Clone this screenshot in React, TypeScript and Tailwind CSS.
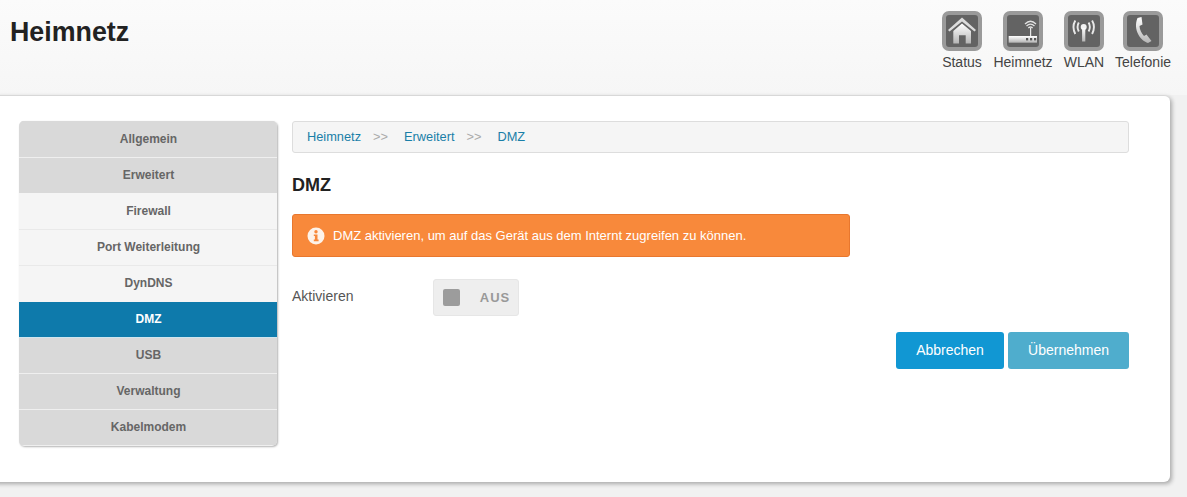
const MENU = [
  { label: "Allgemein", bg: "bg-[#d9d9d9] text-[#666666]", line: "border-[#d9d9d9]" },
  { label: "Erweitert", bg: "bg-[#d9d9d9] text-[#666666]", line: "border-[#efefef]" },
  { label: "Firewall", bg: "bg-[#f5f5f5] text-[#666666]", line: "border-[#f5f5f5]" },
  { label: "Port Weiterleitung", bg: "bg-[#f5f5f5] text-[#666666]", line: "border-[#e9e9e9]" },
  { label: "DynDNS", bg: "bg-[#f5f5f5] text-[#666666]", line: "border-[#e9e9e9]" },
  { label: "DMZ", bg: "bg-[#0e7aab] text-white", line: "border-[#f5f5f5]" },
  { label: "USB", bg: "bg-[#d9d9d9] text-[#666666]", line: "border-[#cfe6ef]" },
  { label: "Verwaltung", bg: "bg-[#d9d9d9] text-[#666666]", line: "border-[#efefef]" },
  { label: "Kabelmodem", bg: "bg-[#d9d9d9] text-[#666666]", line: "border-[#efefef]" },
];

function IconBox({ children }: { children: React.ReactNode }) {
  return (
    <div className="w-[40px] h-[40px] rounded-[7px] border-[4px] border-[#9a9a9a] bg-[#636363] overflow-hidden">
      <svg width="32" height="32" viewBox="0 0 32 32">
        <defs>
          <linearGradient id="fade" x1="0" y1="0" x2="0" y2="1">
            <stop offset="0" stopColor="#ffffff" />
            <stop offset="1" stopColor="#b5b5b5" />
          </linearGradient>
        </defs>
        {children}
      </svg>
    </div>
  );
}

function HomeIcon() {
  return (
    <IconBox>
      <path d="M16 2.5 L30 15 L28.5 16.5 L16 6.5 L3.5 16.5 L2 15 Z" fill="#dcdcdc" />
      <path d="M16 8.5 L25 16 V28.5 H19.7 V20.3 H13 V28.5 H7.3 V16 Z" fill="url(#fade)" />
    </IconBox>
  );
}

function RouterIcon() {
  return (
    <IconBox>
      <path d="M18 9 Q23.5 3.5 29 9" fill="none" stroke="#e0e0e0" strokeWidth="1.3" />
      <path d="M19.5 11 Q23.5 7.2 27.5 11" fill="none" stroke="#e0e0e0" strokeWidth="1.3" />
      <path d="M21.3 13 Q23.5 11 25.7 13" fill="none" stroke="#e0e0e0" strokeWidth="1.3" />
      <rect x="23" y="13" width="1.2" height="8" fill="#e8e8e8" />
      <rect x="1.7" y="21" width="28.3" height="6.7" fill="url(#fade)" />
      <rect x="19" y="23" width="2.2" height="2.4" fill="#555555" />
      <rect x="23" y="23" width="2.2" height="2.4" fill="#555555" />
      <rect x="27" y="23" width="2.2" height="2.4" fill="#555555" />
    </IconBox>
  );
}

function WlanIcon() {
  return (
    <IconBox>
      <circle cx="15.7" cy="12" r="3" fill="#f2f2f2" />
      <path d="M14.1 13 H17.3 V26.5 H14.1 Z" fill="url(#fade)" />
      <path d="M10.8 7.5 Q8.3 12 10.8 16.5" fill="none" stroke="#e8e8e8" strokeWidth="1.9" />
      <path d="M20.6 7.5 Q23.1 12 20.6 16.5" fill="none" stroke="#e8e8e8" strokeWidth="1.9" />
      <path d="M7.3 5.5 Q3.6 12 7.3 19" fill="none" stroke="#e8e8e8" strokeWidth="1.9" />
      <path d="M24.1 5.5 Q27.8 12 24.1 19" fill="none" stroke="#e8e8e8" strokeWidth="1.9" />
    </IconBox>
  );
}

function PhoneIcon() {
  return (
    <IconBox>
      <path
        d="M10.5 3 L14.5 2 L15.5 9.5 L12.5 11 C12.5 14.5 14.5 18 17 21 L19.5 19.5 L24.5 26 L21 28 C14 26 5.5 15 10.5 3 Z"
        fill="url(#fade)"
      />
    </IconBox>
  );
}

const NAV = [
  { label: "Status", icon: <HomeIcon />, width: "w-[40px]" },
  { label: "Heimnetz", icon: <RouterIcon />, width: "w-[60px]" },
  { label: "WLAN", icon: <WlanIcon />, width: "w-[40px]" },
  { label: "Telefonie", icon: <PhoneIcon />, width: "w-[56px]" },
];

export default function App() {
  return (
    <div className="w-[1187px] h-[497px] overflow-hidden bg-[#f1f1f1] font-['Liberation_Sans',Arial,sans-serif] text-[#555555]">
      <header className="h-[95px] bg-gradient-to-b from-[#fbfbfb] to-[#f6f6f6] flex justify-between pl-[10px] pr-[16px]">
        <h1 className="pt-[15px] text-[26.8px] leading-[34px] font-bold text-[#222222]">Heimnetz</h1>
        <nav className="flex gap-[11px] pt-[11px]">
          {NAV.map((n) => (
            <div key={n.label} className={`${n.width} flex flex-col items-center`}>
              {n.icon}
              <span className="mt-[3px] text-[14px] leading-[16px] whitespace-nowrap text-[#444444]">{n.label}</span>
            </div>
          ))}
        </nav>
      </header>

      <main className="-ml-[10px] w-[1180px] h-[387px] bg-white rounded-[6px] border-t border-[#d8d8d8] shadow-[2px_2px_4px_rgba(0,0,0,0.3)] flex gap-[15px] pl-[29px] pt-[25px]">
        <aside className="w-[258px] h-[325px] rounded-[5px] overflow-hidden bg-[#efefef] shadow-[1px_1px_2px_rgba(0,0,0,0.3)]">
          {MENU.map((m) => (
            <div
              key={m.label}
              className={`h-[36px] flex items-center justify-center pl-[1px] pb-[2px] text-[12px] font-bold border-t ${m.bg} ${m.line}`}
            >
              {m.label}
            </div>
          ))}
        </aside>

        <section className="w-[837px]">
          <div className="h-[32px] rounded-[3px] border border-[#dddddd] bg-[#f5f5f5] flex items-center pl-[14px] text-[12.8px] text-[#1a7fa8]">
            <span>Heimnetz</span>
            <span className="ml-[12px] mr-[16px] text-[#aaaaaa]">&gt;&gt;</span>
            <span>Erweitert</span>
            <span className="ml-[12px] mr-[16px] text-[#aaaaaa]">&gt;&gt;</span>
            <span>DMZ</span>
          </div>

          <h2 className="mt-[22px] text-[18px] leading-[20px] font-bold text-[#222222]">DMZ</h2>

          <div className="mt-[19px] w-[558px] h-[43px] rounded-[3px] border border-[#e8772e] bg-[#f8893b] flex items-center pl-[14px] gap-[8px] text-[13px] text-white">
            <svg width="18" height="18" viewBox="0 0 18 18">
              <circle cx="9" cy="9" r="8.5" fill="#fdf3ea" />
              <circle cx="9" cy="4.8" r="1.7" fill="#f8893b" />
              <path d="M6.8 7.5 H10.5 V12.6 H11.6 V14.2 H6.8 V12.6 H7.9 V9.1 H6.8 Z" fill="#f8893b" />
            </svg>
            <span>DMZ aktivieren, um auf das Gerät aus dem Internt zugreifen zu können.</span>
          </div>

          <div className="mt-[22px] flex items-center">
            <span className="w-[141px] pb-[2px] text-[14px] text-[#555555]">Aktivieren</span>
            <div className="w-[86px] h-[37px] rounded-[3px] bg-[#eeeeee] border border-[#e6e6e6] flex items-center pl-[9px] pr-[8px] justify-between">
              <span className="w-[17px] h-[17px] rounded-[2px] bg-[#9c9c9c]" />
              <span className="text-[13px] font-bold tracking-[0.9px] text-[#999999]">AUS</span>
            </div>
          </div>

          <div className="mt-[16px] flex justify-end gap-[4px]">
            <button className="w-[108px] h-[37px] rounded-[3px] bg-[#1197d3] text-[14px] text-white">Abbrechen</button>
            <button className="w-[121px] h-[37px] rounded-[3px] bg-[#4fadcd] text-[14px] text-white">Übernehmen</button>
          </div>
        </section>
      </main>
    </div>
  );
}
